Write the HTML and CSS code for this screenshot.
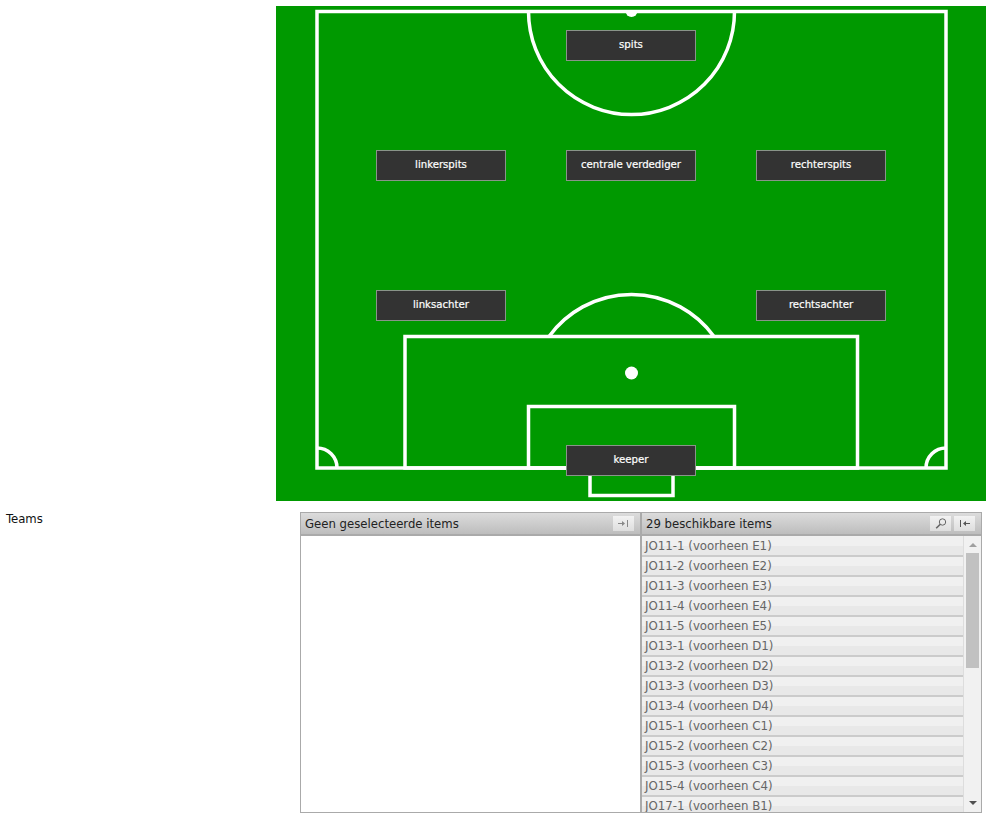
FILE: index.html
```html
<!DOCTYPE html>
<html lang="en">
<head>
    <meta charset="UTF-8">
    <meta name="viewport" content="width=device-width, initial-scale=1.0">
    <title>Opstelling</title>
    <link rel="stylesheet" href="styles.css">
</head>
<body>
    <div class="pitch">
        <svg class="pitch-lines" width="710" height="495" viewBox="276 6 710 495">
            <rect x="276" y="6" width="710" height="495" fill="#009900"/>
            <g fill="none" stroke="#fff" stroke-width="3.5">
                <rect x="317" y="11.5" width="629" height="456.5"/>
                <path d="M528.5 11.5 A103 103 0 0 0 734.5 11.5"/>
                <rect x="405" y="336.5" width="452.5" height="131.5"/>
                <path d="M549 336.5 A102 102 0 0 1 714 336.5"/>
                <rect x="528.5" y="406.5" width="206" height="61.5"/>
                <rect x="590" y="468" width="83" height="27.5"/>
                <path d="M317 448 A20 20 0 0 1 337 468"/>
                <path d="M946 448 A20 20 0 0 0 926 468"/>
            </g>
            <path d="M625.5 11 A6 6 0 0 0 637.5 11 Z" fill="#fff"/>
            <circle cx="631.5" cy="373" r="6.5" fill="#fff"/>
        </svg>
        <button class="position pos-spits">spits</button>
        <button class="position pos-linkerspits">linkerspits</button>
        <button class="position pos-centraal">centrale verdediger</button>
        <button class="position pos-rechterspits">rechterspits</button>
        <button class="position pos-linksachter">linksachter</button>
        <button class="position pos-rechtsachter">rechtsachter</button>
        <button class="position pos-keeper">keeper</button>
    </div>

    <div class="form-row">
        <label class="form-label">Teams</label>
        <div class="multiselect">
            <div class="selected">
                <div class="ms-header">
                    <span class="ms-title">Geen geselecteerde items</span>
                    <span class="ms-button">
                        <svg width="11" height="9" viewBox="0 0 11 9"><path d="M0 4H4V2L7 4.5L4 7V5H0Z" fill="#888"/><path d="M9.5 1V8" stroke="#888"/></svg>
                    </span>
                </div>
                <div class="ms-empty"></div>
            </div>
            <div class="available">
                <div class="ms-header">
                    <span class="ms-title">29 beschikbare items</span>
                    <span class="ms-button">
                        <svg width="12" height="11" viewBox="0 0 12 11"><circle cx="7.5" cy="4" r="3.2" fill="none" stroke="#666"/><path d="M5.3 6.2L1.2 10.3" stroke="#666" stroke-width="1.6"/></svg>
                    </span>
                    <span class="ms-button">
                        <svg width="11" height="9" viewBox="0 0 11 9"><path d="M1.5 1V8" stroke="#555"/><path d="M11 4H7V2L4 4.5L7 7V5H11Z" fill="#555"/></svg>
                    </span>
                </div>
                <div class="ms-body">
                    <ul class="ms-list">
                        <li>JO11-1 (voorheen E1)</li>
                        <li>JO11-2 (voorheen E2)</li>
                        <li>JO11-3 (voorheen E3)</li>
                        <li>JO11-4 (voorheen E4)</li>
                        <li>JO11-5 (voorheen E5)</li>
                        <li>JO13-1 (voorheen D1)</li>
                        <li>JO13-2 (voorheen D2)</li>
                        <li>JO13-3 (voorheen D3)</li>
                        <li>JO13-4 (voorheen D4)</li>
                        <li>JO15-1 (voorheen C1)</li>
                        <li>JO15-2 (voorheen C2)</li>
                        <li>JO15-3 (voorheen C3)</li>
                        <li>JO15-4 (voorheen C4)</li>
                        <li>JO17-1 (voorheen B1)</li>
                    </ul>
                    <div class="scrollbar">
                        <span class="arrow-up"></span>
                        <div class="scroll-track"><div class="scroll-thumb"></div></div>
                        <span class="arrow-down"></span>
                    </div>
                </div>
            </div>
        </div>
    </div>
</body>
</html>
```

FILE: styles.css
```css
html, body {
    height: 819px;
    overflow: hidden;
}
body {
    margin: 0;
    background-color: #fff;
    font-family: 'DejaVu Sans Condensed', 'DejaVu Sans', sans-serif;
    font-size: 13px;
    color: #111;
}
.pitch {
    position: relative;
    width: 710px;
    height: 495px;
    margin: 6px 0 0 276px;
}
.pitch-lines {
    display: block;
}
.position {
    position: absolute;
    width: 130px;
    height: 31px;
    padding: 0 0 3px;
    background-color: #333;
    border: 1px solid #8a948a;
    color: #fff;
    font-family: 'DejaVu Sans Condensed', 'DejaVu Sans', sans-serif;
    font-size: 11.3px;
    -webkit-text-stroke: 0.2px #fff;
}
.pos-spits { left: 290px; top: 24px; }
.pos-linkerspits { left: 100px; top: 144px; }
.pos-centraal { left: 290px; top: 144px; }
.pos-rechterspits { left: 480px; top: 144px; }
.pos-linksachter { left: 100px; top: 284px; }
.pos-rechtsachter { left: 480px; top: 284px; }
.pos-keeper { left: 290px; top: 439px; }

.form-row {
    display: flex;
    margin-top: 11px;
    padding-left: 6px;
}
.form-label {
    width: 294px;
    line-height: 14px;
}
.multiselect {
    display: flex;
    width: 680px;
    height: 299px;
    border: 1px solid #aaa;
}
.selected {
    width: 339px;
    border-right: 2px solid #aaa;
    display: flex;
    flex-direction: column;
}
.available {
    flex: 1;
    min-width: 0;
    display: flex;
    flex-direction: column;
}
.ms-header {
    display: flex;
    align-items: center;
    gap: 3px;
    height: 21px;
    padding: 0 6px 0 4px;
    background: linear-gradient(#dcdcdc, #bdbdbd);
    border-bottom: 2px solid #aaa;
    flex-shrink: 0;
}
.ms-title {
    flex: 1;
    font-size: 13px;
    color: #222;
    margin-top: -1px;
}
.ms-button {
    display: flex;
    align-items: center;
    justify-content: center;
    width: 21px;
    height: 15px;
    background: linear-gradient(#f2f2f2, #dedede);
}
.ms-empty {
    flex: 1;
    background-color: #fff;
}
.ms-body {
    flex: 1;
    display: flex;
    min-height: 0;
}
.ms-list {
    flex: 1;
    margin: 0;
    padding: 1px 0 0;
    list-style: none;
    overflow: hidden;
    background-color: #f1f1f1;
}
.ms-list li {
    height: 18px;
    padding-left: 3px;
    font-family: 'DejaVu Sans', sans-serif;
    font-size: 11.8px;
    line-height: 18px;
    color: #666;
    background: linear-gradient(#f0f0f0 0, #f0f0f0 9px, #e8e8e8 9px, #e8e8e8 100%);
    border-bottom: 2px solid #cbcbcb;
    white-space: nowrap;
}
.scrollbar {
    width: 17px;
    display: flex;
    flex-direction: column;
    align-items: center;
    background-color: #f1f1f1;
    border-left: 1px solid #ddd;
}
.arrow-up, .arrow-down {
    flex-shrink: 0;
    width: 0;
    height: 0;
    margin: 7px 0;
    border-left: 4px solid transparent;
    border-right: 4px solid transparent;
}
.arrow-up { border-bottom: 4px solid #a0a0a0; margin-bottom: 6px; }
.arrow-down { border-top: 4px solid #505050; }
.scroll-track {
    flex: 1;
    align-self: stretch;
}
.scroll-thumb {
    width: 13px;
    height: 115px;
    margin-left: 2px;
    background-color: #c1c1c1;
}
```
